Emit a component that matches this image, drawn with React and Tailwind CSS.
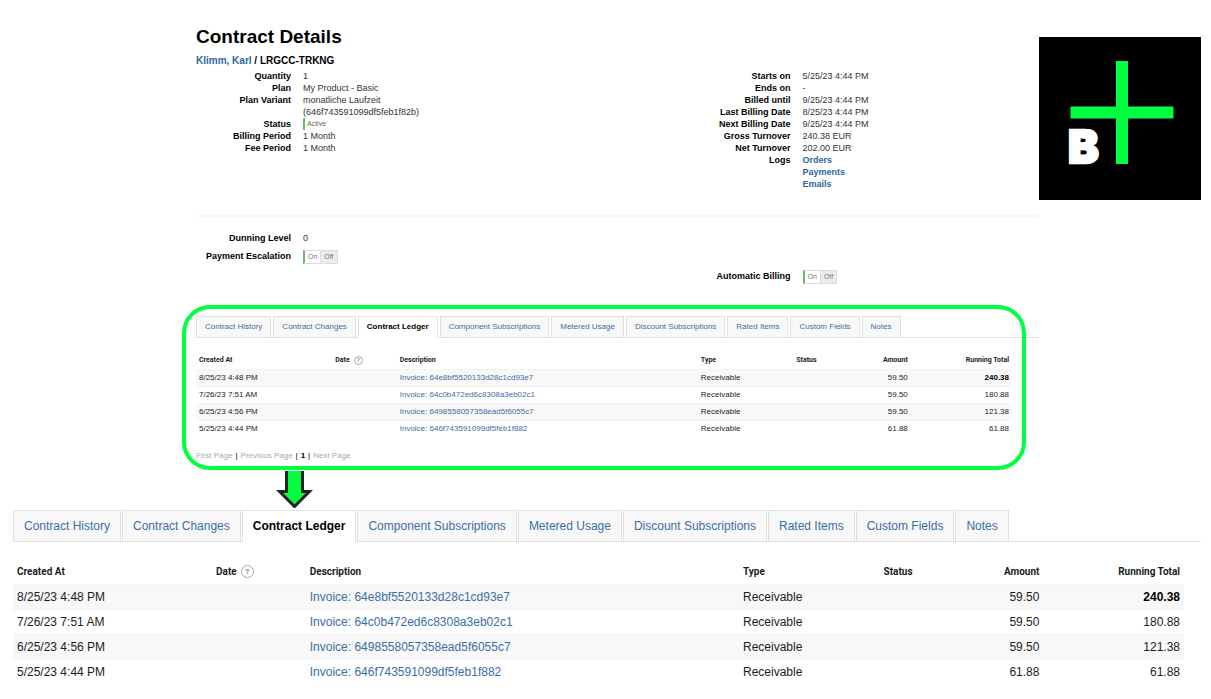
import { useState } from 'react';
import clsx from 'clsx';

const tabs = [
  'Contract History',
  'Contract Changes',
  'Contract Ledger',
  'Component Subscriptions',
  'Metered Usage',
  'Discount Subscriptions',
  'Rated Items',
  'Custom Fields',
  'Notes',
];

const entries = [
  { createdAt: '8/25/23 4:48 PM', invoice: '64e8bf5520133d28c1cd93e7', amount: '59.50', total: '240.38' },
  { createdAt: '7/26/23 7:51 AM', invoice: '64c0b472ed6c8308a3eb02c1', amount: '59.50', total: '180.88' },
  { createdAt: '6/25/23 4:56 PM', invoice: '6498558057358ead5f6055c7', amount: '59.50', total: '121.38' },
  { createdAt: '5/25/23 4:44 PM', invoice: '646f743591099df5feb1f882', amount: '61.88', total: '61.88' },
];

function Field({ label, children }) {
  return (
    <div className="flex gap-3">
      <dt className="w-[95px] shrink-0 text-right font-bold text-black">{label}</dt>
      <dd>{children}</dd>
    </div>
  );
}

function Toggle({ label }) {
  const [on, setOn] = useState(true);
  const base = 'px-[3px] h-full cursor-pointer';

  return (
    <div role="group" aria-label={label} className="flex h-[14px] border border-l-2 border-[#dcdcdc] border-l-[#5cc45c] text-[7px] leading-3 text-[#777]">
      <button type="button" aria-pressed={on} onClick={() => setOn(true)} className={clsx(base, on ? 'bg-white' : 'bg-[#ececec]')}>
        On
      </button>
      <button type="button" aria-pressed={!on} onClick={() => setOn(false)} className={clsx(base, 'border-l border-[#dcdcdc]', on ? 'bg-[#ececec]' : 'bg-white')}>
        Off
      </button>
    </div>
  );
}

function Tabs({ large }) {
  const [active, setActive] = useState('Contract Ledger');

  return (
    <div role="tablist" className={clsx('flex border-b border-[#e0e0e0]', large ? 'h-8 gap-px text-[12px]' : 'h-[22px] gap-0.5 text-[8px]')}>
      {tabs.map(tab => (
        <button
          key={tab}
          type="button"
          role="tab"
          aria-selected={tab === active}
          onClick={() => setActive(tab)}
          className={clsx(
            '-mb-px cursor-pointer whitespace-nowrap border',
            large ? 'px-[10px]' : 'px-2',
            tab === active
              ? 'border-[#e0e0e0] border-b-white bg-white font-bold text-black'
              : 'border-[#e0e0e0] bg-[#f8f8f8] text-[#3a6ea5]'
          )}
        >
          {tab}
        </button>
      ))}
    </div>
  );
}

function LedgerTable({ large }) {
  const cell = large ? 'px-1' : 'px-[3px]';

  return (
    <table className={clsx('w-full table-fixed text-left text-[#1c1c1c]', large ? 'text-[12px] leading-6' : 'text-[8px] leading-4')}>
      <thead className={clsx('font-[Roboto,sans-serif]', large ? 'text-[10px]' : 'text-[7px]')}>
        <tr className={large ? 'h-[25px]' : 'h-[17px]'}>
          <th className={clsx(cell, large ? 'w-[17%]' : 'w-[16.7%]')}>Created At</th>
          <th className={clsx(cell, large ? 'w-[8%]' : 'w-[7.9%]')}>
            <span className="flex items-center gap-1">
              Date
              <span className={clsx('flex items-center justify-center rounded-full border border-[#aaa] text-[#888]', large ? 'size-[13px] text-[8px]' : 'size-[9px] text-[6px]')}>
                ?
              </span>
            </span>
          </th>
          <th className={clsx(cell, large ? 'w-[37%]' : 'w-[36.9%]')}>Description</th>
          <th className={clsx(cell, large ? 'w-[12%]' : 'w-[11.7%]')}>Type</th>
          <th className={clsx(cell, large ? 'w-[7%]' : 'w-[7.2%]')}>Status</th>
          <th className={clsx(cell, 'text-right', large ? 'w-[7%]' : 'w-[7.2%]')}>Amount</th>
          <th className={clsx(cell, 'text-right', large ? 'w-[12%]' : 'w-[12.4%]')}>Running Total</th>
        </tr>
      </thead>
      <tbody>
        {entries.map((entry, i) => (
          <tr key={entry.invoice} className="border-t border-[#f3f3f3] odd:bg-[#f8f8f8]">
            <td className={cell}>{entry.createdAt}</td>
            <td className={cell}></td>
            <td className={cell}>
              <a href="#invoice" className="text-[#3a6ea5]">Invoice: {entry.invoice}</a>
            </td>
            <td className={cell}>Receivable</td>
            <td className={cell}></td>
            <td className={clsx(cell, 'text-right')}>{entry.amount}</td>
            <td className={clsx(cell, 'text-right', i === 0 && 'font-bold text-black')}>{entry.total}</td>
          </tr>
        ))}
      </tbody>
    </table>
  );
}

function Logo() {
  return (
    <svg viewBox="0 0 162 163" className="mt-[37px] mr-[10px] w-[162px] shrink-0 self-start" role="img" aria-label="B+">
      <rect width="162" height="163" fill="#000" />
      <path d="M77 24h12v45.500h45.500v12H89V127H77V81.500H31.500v-12H77z" fill="#00ff40" />
      <text x="29" y="126" fill="#fff" stroke="#fff" strokeWidth="2.500" className="font-[Inter,sans-serif] text-[46px] font-black">B</text>
    </svg>
  );
}

export default function App() {
  return (
    <div className="min-h-screen bg-white pb-4 font-['Liberation_Sans',Arial,sans-serif]">
      <div className="flex">
        <main className="ml-[196px] min-w-0 flex-1 pt-[25px] text-[9px] leading-3 text-[#333]">
          <h1 className="text-[19px] leading-6 font-bold text-black">Contract Details</h1>
          <h2 className="mt-1 text-[10px] leading-[15px] font-bold text-black">
            <a href="#customer" className="text-[#2f66a0]">Klimm, Karl</a> / LRGCC-TRKNG
          </h2>

          <div className="mt-0.5 grid grid-cols-[16fr_11fr]">
            <dl>
              <Field label="Quantity">1</Field>
              <Field label="Plan">My Product - Basic</Field>
              <Field label="Plan Variant">
                monatliche Laufzeit
                <br />
                (646f743591099df5feb1f82b)
              </Field>
              <Field label="Status">
                <span className="block border-l-2 border-[#5cc45c] pl-0.5 text-[7px] text-[#666]">Active</span>
              </Field>
              <Field label="Billing Period">1 Month</Field>
              <Field label="Fee Period">1 Month</Field>
            </dl>
            <dl>
              <Field label="Starts on">5/25/23 4:44 PM</Field>
              <Field label="Ends on">-</Field>
              <Field label="Billed until">9/25/23 4:44 PM</Field>
              <Field label="Last Billing Date">8/25/23 4:44 PM</Field>
              <Field label="Next Billing Date">9/25/23 4:44 PM</Field>
              <Field label="Gross Turnover">240.38 EUR</Field>
              <Field label="Net Turnover">202.00 EUR</Field>
              <Field label="Logs">
                <div className="flex flex-col font-bold text-[#2f66a0]">
                  <a href="#orders">Orders</a>
                  <a href="#payments">Payments</a>
                  <a href="#emails">Emails</a>
                </div>
              </Field>
            </dl>
          </div>

          <hr className="mt-[25px] border-t-2 border-[#f7f7f7]" />

          <div className="mt-[15px] grid grid-cols-[16fr_11fr] items-end">
            <dl className="flex flex-col gap-1.5 pb-5">
              <Field label="Dunning Level">0</Field>
              <Field label="Payment Escalation"><Toggle label="Payment Escalation" /></Field>
            </dl>
            <dl>
              <Field label="Automatic Billing"><Toggle label="Automatic Billing" /></Field>
            </dl>
          </div>
        </main>
        <Logo />
      </div>

      {/* Ledger section, outlined */}
      <section className="relative mt-8 mr-[172px] ml-[196px]">
        <Tabs />
        <div className="mt-[14px] mr-[27px]">
          <LedgerTable />
        </div>
        <nav className="mt-[13px] flex gap-[3px] text-[8px] leading-3 text-[#aaa]">
          <span>First Page</span>
          <span className="text-black">|</span>
          <span>Previous Page</span>
          <span className="text-black">|</span>
          <span className="font-bold text-black">1</span>
          <span className="text-black">|</span>
          <span>Next Page</span>
        </nav>
        <div className="pointer-events-none absolute -top-[11px] right-[13px] -bottom-2 -left-[14px] rounded-[28px] border-4 border-[#00ff40]" />
      </section>

      <svg viewBox="0 0 37 37" className="mt-[9px] ml-[276px] w-[37px]" aria-hidden="true">
        <path d="M10.500 0v20.500H3.500L18.500 35.500L33.500 20.500H26.500V0" fill="#00ff40" stroke="#222" strokeWidth="3" />
      </svg>

      {/* Same ledger, enlarged */}
      <section className="mt-0.5 mr-[10px] ml-[13px]">
        <Tabs large />
        <div className="mt-[18px] mr-[17px]">
          <LedgerTable large />
        </div>
      </section>
    </div>
  );
}
